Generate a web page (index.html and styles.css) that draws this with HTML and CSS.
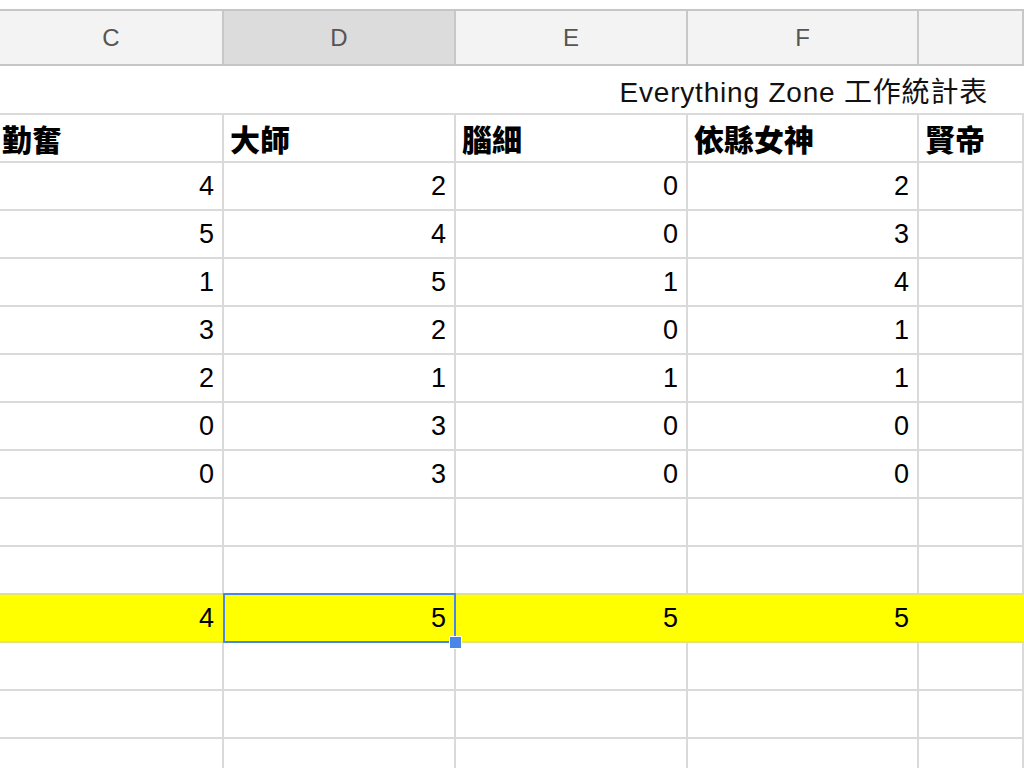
FILE: index.html
```html
<!DOCTYPE html>
<html lang="zh-Hant">
<head>
<meta charset="utf-8">
<title>Everything Zone 工作統計表</title>
<link rel="stylesheet" href="styles.css">
</head>
<body>
<div class="sheet">
  <div class="colhead">
    <div class="ch">C</div>
    <div class="ch sel">D</div>
    <div class="ch">E</div>
    <div class="ch">F</div>
    <div class="ch"></div>
  </div>
  <div class="title-row"><span class="title">Everything Zone 工作統計表</span></div>
  <div class="row names">
    <div class="cell">勤奮</div>
    <div class="cell">大師</div>
    <div class="cell">腦細</div>
    <div class="cell">依縣女神</div>
    <div class="cell">賢帝</div>
  </div>
  <div class="row"><div class="cell num">4</div><div class="cell num">2</div><div class="cell num">0</div><div class="cell num">2</div><div class="cell"></div></div>
  <div class="row"><div class="cell num">5</div><div class="cell num">4</div><div class="cell num">0</div><div class="cell num">3</div><div class="cell"></div></div>
  <div class="row"><div class="cell num">1</div><div class="cell num">5</div><div class="cell num">1</div><div class="cell num">4</div><div class="cell"></div></div>
  <div class="row"><div class="cell num">3</div><div class="cell num">2</div><div class="cell num">0</div><div class="cell num">1</div><div class="cell"></div></div>
  <div class="row"><div class="cell num">2</div><div class="cell num">1</div><div class="cell num">1</div><div class="cell num">1</div><div class="cell"></div></div>
  <div class="row"><div class="cell num">0</div><div class="cell num">3</div><div class="cell num">0</div><div class="cell num">0</div><div class="cell"></div></div>
  <div class="row"><div class="cell num">0</div><div class="cell num">3</div><div class="cell num">0</div><div class="cell num">0</div><div class="cell"></div></div>
  <div class="row"><div class="cell"></div><div class="cell"></div><div class="cell"></div><div class="cell"></div><div class="cell"></div></div>
  <div class="row pre-hl"><div class="cell"></div><div class="cell"></div><div class="cell"></div><div class="cell"></div><div class="cell"></div></div>
  <div class="row hl">
    <div class="cell num">4</div>
    <div class="cell num active">5<span class="handle"></span></div>
    <div class="cell num">5</div>
    <div class="cell num">5</div>
    <div class="cell"></div>
  </div>
  <div class="row"><div class="cell"></div><div class="cell"></div><div class="cell"></div><div class="cell"></div><div class="cell"></div></div>
  <div class="row"><div class="cell"></div><div class="cell"></div><div class="cell"></div><div class="cell"></div><div class="cell"></div></div>
  <div class="row"><div class="cell"></div><div class="cell"></div><div class="cell"></div><div class="cell"></div><div class="cell"></div></div>
</div>
</body>
</html>
```

FILE: styles.css
```css
html, body {
  margin: 0;
  padding: 0;
  background: #ffffff;
  overflow: hidden;
}

.sheet {
  width: 1024px;
  height: 768px;
  overflow: hidden;
  padding-top: 9px;
  box-sizing: border-box;
  font-family: "Liberation Sans", Arial, "Noto Sans CJK TC", sans-serif;
  color: #000;
}

.colhead {
  display: grid;
  grid-template-columns: 224px 232px 232px 231px 1fr;
  height: 57px;
  box-sizing: border-box;
  border-top: 2px solid #c6c6c6;
  border-bottom: 2px solid #c6c6c6;
  background: #f3f3f3;
}

.ch {
  border-right: 2px solid #c8c8c8;
  display: flex;
  align-items: center;
  justify-content: center;
  font-size: 24px;
  color: #555;
}

.ch.sel {
  background: #dcdcdc;
}

.title-row {
  height: 49px;
  box-sizing: border-box;
  border-bottom: 2px solid #dadada;
  display: flex;
  align-items: center;
  justify-content: flex-end;
  padding-right: 36px;
}

.title {
  font-size: 28px;
  letter-spacing: 0.8px;
  color: #111;
}

.row {
  display: grid;
  grid-template-columns: 224px 232px 232px 231px 1fr;
  height: 48px;
  box-sizing: border-box;
  border-bottom: 2px solid #dadada;
}

.cell {
  border-right: 2px solid #dadada;
  display: flex;
  align-items: center;
  padding: 0 8px;
  font-size: 27px;
  position: relative;
}

.names .cell {
  font-family: "Noto Sans CJK TC", sans-serif;
  font-weight: 900;
  font-size: 30px;
  padding-left: 6px;
}

.names .cell:first-child {
  padding-left: 2px;
}

.num {
  justify-content: flex-end;
  padding-right: 8px;
}

.pre-hl {
  border-bottom-color: #e2e27a;
}

.hl {
  background: #ffff00;
  border-bottom-color: #e2e27a;
}

.hl .cell {
  border-right-color: #ffff00;
}

.active::after {
  content: "";
  position: absolute;
  left: -1px;
  top: -2px;
  right: -2px;
  bottom: -2px;
  border: 2px solid #4a86e8;
  pointer-events: none;
}

.handle {
  position: absolute;
  right: -8px;
  bottom: -8px;
  width: 11px;
  height: 11px;
  background: #4a86e8;
  border: 1px solid #ffffff;
  z-index: 2;
}
```
